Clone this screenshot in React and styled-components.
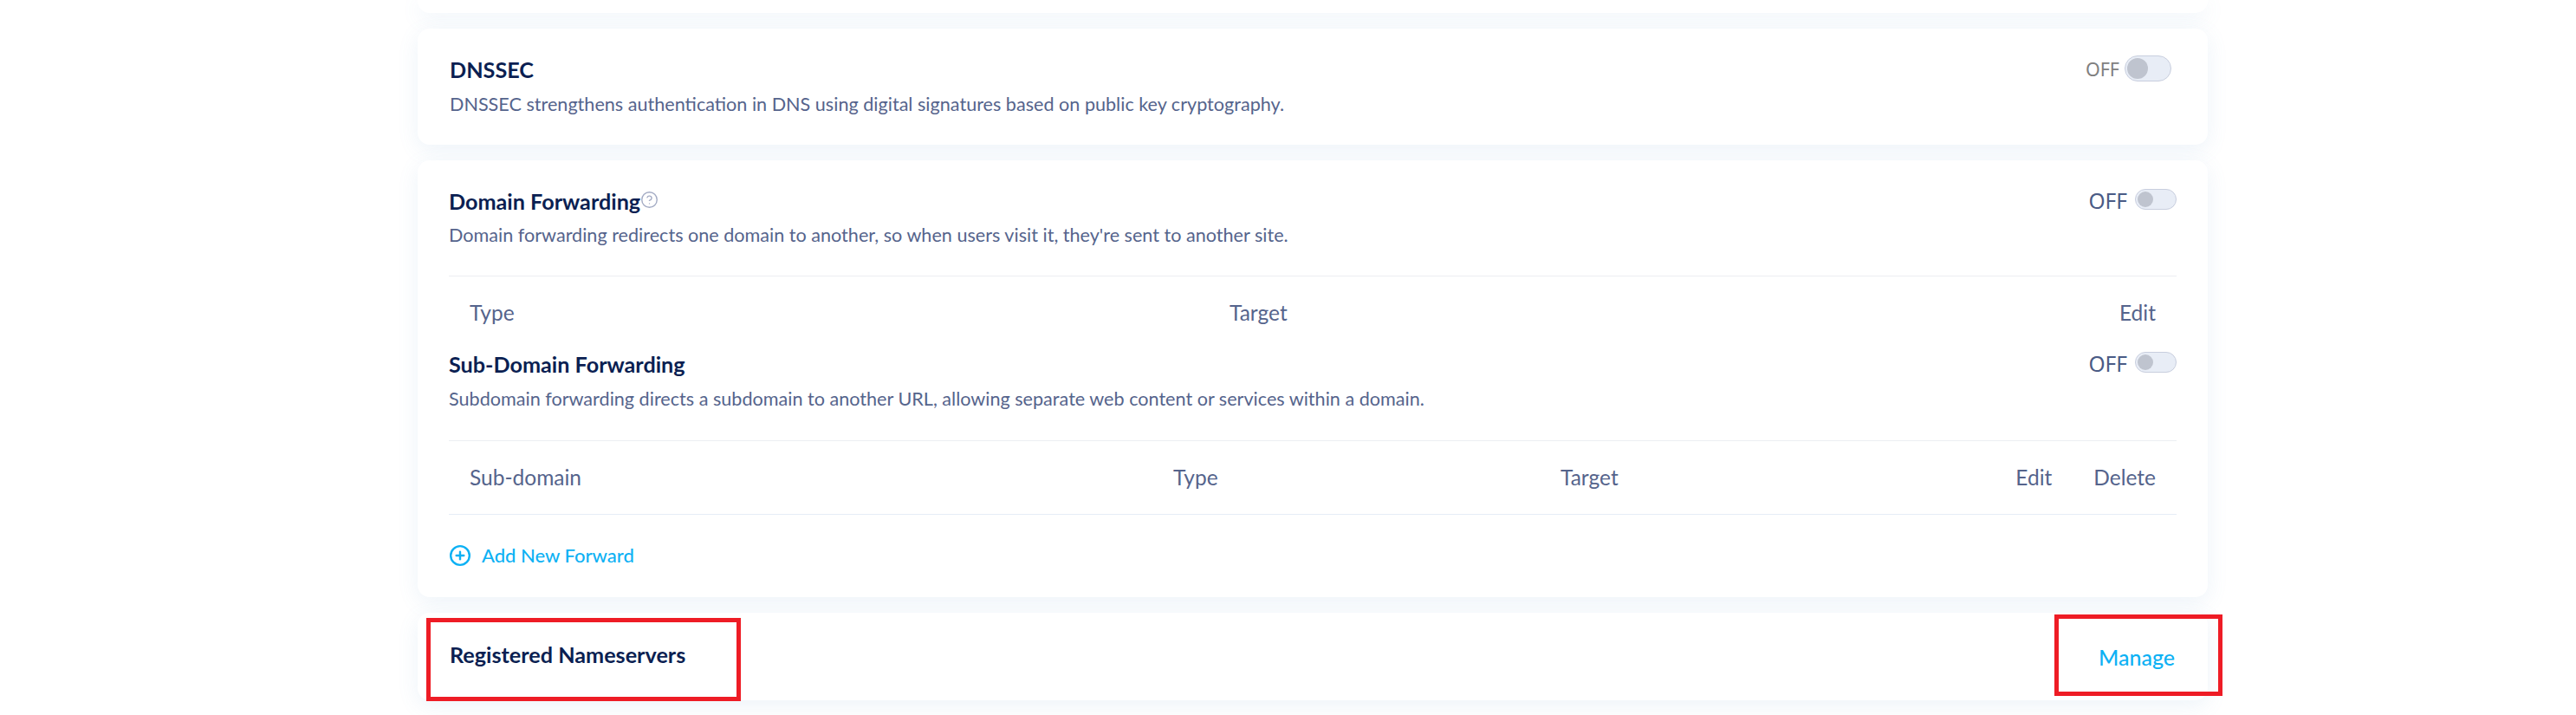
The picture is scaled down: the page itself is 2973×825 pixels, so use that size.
import React from "react";
import styled, { createGlobalStyle } from "styled-components";
import { CircleHelp, CirclePlus } from "lucide-react";

const Global = createGlobalStyle`
  html, body { margin: 0; padding: 0; background: #fff; }
  body { font-family: "Lato", "Noto Sans", sans-serif; overflow: hidden; }
`;
const Page = styled.div`
  width: 2973px; height: 825px; box-sizing: border-box; padding: 0 425px 0 482px;
  position: relative; overflow: hidden;
  display: flex; flex-direction: column; gap: 18px;
`;
const Card = styled.section`
  background: #fff; border-radius: 14px; box-sizing: border-box; flex: none;
  box-shadow: 0 6px 24px rgba(90, 150, 200, 0.11);
`;
const TopStub = styled(Card)`height: 15px; border-radius: 0 0 14px 14px;`;
const DnsCard = styled(Card)`height: 134px; padding: 31px 42px 0 37px;`;
const ForwardCard = styled(Card)`height: 504px; padding: 31px 36px 0 36px;`;
const NameCard = styled(Card)`
  height: 101px; padding: 0 38px 5px 37px; display: flex; justify-content: space-between; align-items: center;
`;
const Head = styled.div`display: flex; justify-content: space-between; align-items: flex-start;`;
const Title = styled.h3`
  margin: 0; font-size: 25.2px; line-height: 32px; font-weight: 700; color: #0b1f52;
  display: flex; align-items: flex-start;
`;
const Desc = styled.p`margin: ${p => p.$gap}px 0 0; font-size: 21.6px; line-height: 28px; color: #55648c;`;
const Hint = styled(CircleHelp)`color: #a3abc4; margin-top: 4px;`;
const SwitchWrap = styled.div`display: flex; align-items: flex-start; gap: ${p => p.$big ? 6 : 9}px;`;
const OffLabel = styled.span`
  font-family: "Noto Sans", sans-serif; font-size: ${p => p.$big ? 21.5 : 24.5}px; line-height: 32px;
  color: ${p => p.$big ? "#808080" : "#4a5b85"};
`;
const Track = styled.span`
  display: flex; align-items: center; box-sizing: border-box;
  width: ${p => p.$big ? 54 : 48}px; height: ${p => p.$big ? 30 : 24}px; margin-top: ${p => p.$big ? 0 : 2}px;
  padding-left: 2px; border-radius: 15px; background: #e8edf6; border: 1px solid #c8cede;
`;
const Knob = styled.span`
  width: ${p => p.$big ? 24 : 18}px; height: ${p => p.$big ? 24 : 18}px; border-radius: 50%; background: #bfc4cf;
`;
const Divider = styled.hr`margin: ${p => p.$top}px 0 0; border: 0; height: 1px; background: ${p => p.$c || "#eceef2"};`;
const Row = styled.div`
  display: grid; grid-template-columns: ${p => p.$cols}; align-items: center; box-sizing: border-box;
  height: ${p => p.$h}px; padding: 0 24px 2px; font-size: 24.5px; color: #55648c;
`;
const Add = styled.a`
  display: flex; align-items: center; gap: 12px; margin-top: 33px; font-size: 22px; font-weight: 500; color: #0db1f4;
`;
const Manage = styled.a`font-size: 25px; font-weight: 500; color: #0db1f4; margin-top: 5px;`;
const Mark = styled.div`
  position: absolute; box-sizing: border-box; border: 5px solid #ee1c25;
  left: ${p => p.$x}px; top: ${p => p.$y}px; width: ${p => p.$w}px; height: ${p => p.$h}px;
`;

const Toggle = ({ big }) => (
  <SwitchWrap $big={big}>
    <OffLabel $big={big}>OFF</OffLabel>
    <Track $big={big}><Knob $big={big} /></Track>
  </SwitchWrap>
);

export default function App() {
  return (
    <Page>
      <Global />
      <TopStub />
      <DnsCard>
        <Head>
          <Title>DNSSEC</Title>
          <Toggle big />
        </Head>
        <Desc $gap={10}>DNSSEC strengthens authentication in DNS using digital signatures based on public key cryptography.</Desc>
      </DnsCard>
      <ForwardCard>
        <Head>
          <Title>Domain Forwarding<Hint size={21} strokeWidth={1.6} /></Title>
          <Toggle />
        </Head>
        <Desc $gap={9}>Domain forwarding redirects one domain to another, so when users visit it, they're sent to another site.</Desc>
        <Divider $top={33} />
        <Row $h={85} $cols="877px 1fr auto"><span>Type</span><span>Target</span><span>Edit</span></Row>
        <Head>
          <Title>Sub-Domain Forwarding</Title>
          <Toggle />
        </Head>
        <Desc $gap={10}>Subdomain forwarding directs a subdomain to another URL, allowing separate web content or services within a domain.</Desc>
        <Divider $top={34} />
        <Row $h={84} $cols="812px 447px 1fr 90px auto"><span>Sub-domain</span><span>Type</span><span>Target</span><span>Edit</span><span>Delete</span></Row>
        <Divider $c="#e6edf7" $top={0} />
        <Add><CirclePlus size={26} strokeWidth={2.2} />Add New Forward</Add>
      </ForwardCard>
      <NameCard>
        <Title>Registered Nameservers</Title>
        <Manage>Manage</Manage>
      </NameCard>
      <Mark $x={492} $y={713} $w={363} $h={96} />
      <Mark $x={2371} $y={709} $w={194} $h={94} />
    </Page>
  );
}
